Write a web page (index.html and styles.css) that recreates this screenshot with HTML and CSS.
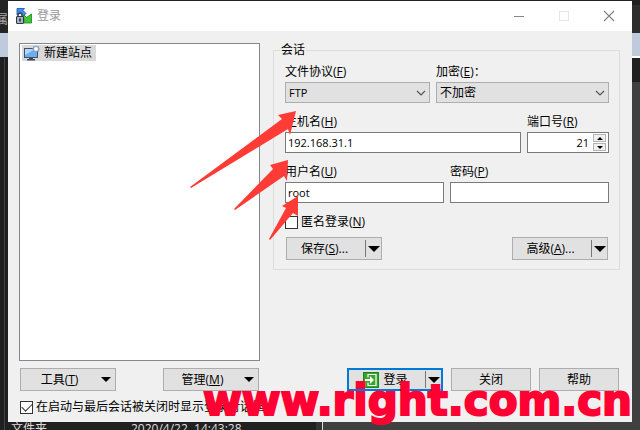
FILE: index.html
```html
<!DOCTYPE html>
<html lang="zh-CN">
<head>
<meta charset="utf-8">
<title>登录</title>
<link rel="stylesheet" href="styles.css">
</head>
<body>
<div class="backdrop-left"><span>属</span></div>
<div class="backdrop-right"></div>

<main class="window">
  <header class="titlebar">
    <svg class="logo" width="16" height="16" viewBox="0 0 16 16" aria-hidden="true">
      <path d="M1 .5h7.500L7 2.500l3 3-2.500 2.500-3-3L1 7z" fill="#3f8df0" stroke="#1750a0" stroke-width=".8"/>
      <path d="M8 7l2.500 2.500L15.500 6v9H7.500l1-2.500L7 10z" fill="#3fc735" stroke="#15801c" stroke-width=".8"/>
      <path d="M2 9V7.500q0-2.500 2-2.500t2 2.500V9" fill="none" stroke="#3b4656" stroke-width="1.500"/>
      <rect x=".5" y="8.500" width="7" height="7" rx=".5" fill="#a8b3c0" stroke="#2d3746"/>
      <path d="M4 10.500v3" stroke="#1b2430" stroke-width="1.500"/>
    </svg>
    <h1>登录</h1>
    <div class="window-controls">
      <button type="button" aria-label="最小化"><svg width="12" height="12" viewBox="0 0 12 12"><path d="M1 6.500h10" stroke="#888"/></svg></button>
      <button type="button" aria-label="最大化" disabled><svg width="12" height="12" viewBox="0 0 12 12"><path d="M1.500 1.500h9v9h-9z" fill="none" stroke="#e4e4e4"/></svg></button>
      <button type="button" aria-label="关闭窗口"><svg width="12" height="12" viewBox="0 0 12 12"><path d="M1 1l10 10M11 1L1 11" stroke="#808080" stroke-width="1.100"/></svg></button>
    </div>
  </header>

  <form class="content">
    <div class="panels">
      <ul class="sites">
        <li>
          <svg width="16" height="16" viewBox="0 0 16 16" aria-hidden="true">
            <rect x=".5" y="3.500" width="13" height="9" fill="#6eaef0" stroke="#445066"/>
            <path d="M1 4h10L1 10z" fill="#b2d8fb"/>
            <path d="M5 13h4v1h2v1.500H3V14h2z" fill="#3f4855"/>
            <path d="M12 0l1 1.500 2-.5v2l1 1-1 1v2l-2-.5L12 8l-1-1.500-2 .5V5L8 4l1-1V1l2 .5z" fill="#8ba4bd"/>
            <circle cx="12" cy="4" r="2" fill="#fff"/>
          </svg>
          <span>新建站点</span>
        </li>
      </ul>

      <fieldset class="session">
        <legend>会话</legend>
        <div class="row protocol">
          <div class="field">
            <label for="protocol">文件协议(<u>F</u>)</label>
            <div class="select">
              <select id="protocol" class="latin"><option>FTP</option></select>
              <svg width="10" height="6" viewBox="0 0 10 6" aria-hidden="true"><path d="M1 1l4 4 4-4" fill="none" stroke="#555" stroke-width="1.200"/></svg>
            </div>
          </div>
          <div class="field">
            <label for="encryption">加密(<u>E</u>)：</label>
            <div class="select">
              <select id="encryption"><option>不加密</option></select>
              <svg width="10" height="6" viewBox="0 0 10 6" aria-hidden="true"><path d="M1 1l4 4 4-4" fill="none" stroke="#555" stroke-width="1.200"/></svg>
            </div>
          </div>
        </div>
        <div class="row host">
          <div class="field">
            <label for="host">主机名(<u>H</u>)</label>
            <input id="host" type="text" value="192.168.31.1">
          </div>
          <div class="field">
            <label for="port">端口号(<u>R</u>)</label>
            <div class="spin">
              <input id="port" type="text" value="21">
              <div class="spin-buttons">
                <button type="button" aria-label="增加"><svg width="6" height="3" viewBox="0 0 6 3"><path d="M0 3l3-3 3 3z"/></svg></button>
                <button type="button" aria-label="减少"><svg width="6" height="3" viewBox="0 0 6 3"><path d="M0 0h6L3 3z"/></svg></button>
              </div>
            </div>
          </div>
        </div>
        <div class="row account">
          <div class="field">
            <label for="user">用户名(<u>U</u>)</label>
            <input id="user" type="text" value="root">
          </div>
          <div class="field">
            <label for="password">密码(<u>P</u>)</label>
            <input id="password" type="password">
          </div>
        </div>
        <label class="check"><input type="checkbox"><span>匿名登录(<u>N</u>)</span></label>
        <div class="actions">
          <button type="button" class="btn split"><span>保存(<u>S</u>)...</span><i class="caret"></i></button>
          <button type="button" class="btn split"><span>高级(<u>A</u>)...</span><i class="caret"></i></button>
        </div>
      </fieldset>
    </div>

    <footer class="footer">
      <div class="footer-left">
        <button type="button" class="btn menu"><span>工具(<u>T</u>)</span><i class="caret"></i></button>
        <button type="button" class="btn menu"><span>管理(<u>M</u>)</span><i class="caret"></i></button>
      </div>
      <div class="footer-right">
        <button type="submit" class="btn split primary">
          <span><svg width="16" height="16" viewBox="0 0 16 16" aria-hidden="true"><rect x=".5" y=".5" width="15" height="15" fill="#35a52b" stroke="#23821e"/><path d="M5 5.500v-3h8v11H5v-3" fill="none" stroke="#fff" stroke-width="1.200"/><path d="M2 7h5V4l4 4-4 4V9H2z" fill="#fff"/></svg>登录</span><i class="caret"></i>
        </button>
        <button type="button" class="btn">关闭</button>
        <button type="button" class="btn">帮助</button>
      </div>
    </footer>
    <label class="check startup"><input type="checkbox" checked><span>在启动与最后会话被关闭时显示登录对话框</span></label>
  </form>
</main>

<div class="file-list"><span>文件夹</span><span>2020/4/22&nbsp; 14:43:28</span></div>

<svg class="arrows" width="120" height="150" viewBox="185 100 120 150" aria-hidden="true">
  <path d="M296 111L278 115l4 4L190 187l1 1L288 129l2 6z"/>
  <path d="M288 160l-18 5 3 4L234 209l1 1L284 176l3 5z"/>
  <path d="M298 196l-16 10 4 2L269 239l1 1L293 213l5 3z"/>
</svg>
<div class="watermark">www.right.com.cn</div>
</body>
</html>
```

FILE: styles.css
```css
* {
  box-sizing: border-box;
}

body {
  position: relative;
  margin: 0;
  min-height: 100vh;
  overflow: hidden;
  background: #222;
  color: #000;
  font: 12px/16px "Open Sans", "Noto Sans CJK SC", sans-serif;
}

button,
input,
select {
  margin: 0;
  border-radius: 0;
  color: inherit;
  font: inherit;
}

/* Slices of the application behind the dialog */
.backdrop-left,
.backdrop-right {
  position: absolute;
  top: 0;
  bottom: 0;
  width: 8px;
  overflow: hidden;
}

.backdrop-left {
  left: 0;
  padding-top: 12px;
  background: linear-gradient(#242424 33px, #bdcbdc 33px 57px, #1f1f1f 57px);
  color: #aaa;
}

.backdrop-left::after {
  content: "";
  position: absolute;
  top: 58px;
  bottom: 0;
  left: 4px;
  border-left: 1px solid #3c414b;
}

.backdrop-left span {
  display: block;
  margin-left: -4px;
}

.backdrop-right {
  right: 0;
  background: linear-gradient(#202020 5px, #2d2d2d 5px 33px, #bdcbdc 33px 56px, #fff 56px 58px, #202020 58px 82px, #404040 82px);
}

.window {
  position: relative;
  margin: 1px 8px 0;
  background: #f0f0f0;
}

.titlebar {
  display: flex;
  align-items: center;
  height: 30px;
  padding: 0 1px 0 8px;
  background: #fff;
}

.titlebar h1 {
  margin: 0 auto 0 5px;
  color: #999;
  font-size: 12px;
  font-weight: 400;
}

.window-controls {
  display: flex;
}

.window-controls button {
  display: grid;
  place-items: center;
  width: 45px;
  height: 28px;
  padding: 0;
  border: 0;
  background: none;
}

.content {
  padding: 12px 12px 7px 11px;
}

.panels {
  display: grid;
  grid-template-columns: 241fr 347fr;
  gap: 13px;
}

.sites {
  min-height: 318px;
  margin: 0;
  padding: 1px 2px;
  border: 1px solid #828790;
  background: #fff;
  list-style: none;
}

.sites li {
  display: flex;
  align-items: center;
  gap: 4px;
  width: max-content;
  padding: 0 4px 0 2px;
  background: #d9d9d9;
}

.session {
  align-self: start;
  min-width: 0;
  margin: 0;
  padding: 7px 10px 9px 11px;
  border: 1px solid #dcdcdc;
}

.session legend {
  margin-left: -5px;
  padding: 0 1px;
  line-height: 14px;
}

.row {
  display: grid;
  gap: 6px;
  margin-bottom: 11px;
}

.protocol {
  grid-template-columns: 145fr 173fr;
}

.host {
  grid-template-columns: 236fr 82fr;
}

.account {
  grid-template-columns: 1fr 1fr;
}

.field {
  display: grid;
  gap: 2px;
  min-width: 0;
}

.field input {
  width: 100%;
  min-width: 0;
  height: 21px;
  padding: 0 2px;
  border: 1px solid #7a7a7a;
  background: #fff;
  font-size: 11px;
}

.select {
  position: relative;
}

.select select {
  display: block;
  width: 100%;
  height: 21px;
  padding: 0 3px;
  border: 1px solid #adadad;
  background: #e1e1e1;
  appearance: none;
}

.select .latin {
  font-size: 11px;
}

.select svg {
  position: absolute;
  top: 8px;
  right: 4px;
  pointer-events: none;
}

.spin {
  display: flex;
  height: 21px;
  padding: 1px 2px;
  border: 1px solid #7a7a7a;
  background: #fff;
}

.spin input {
  flex: 1;
  height: 17px;
  padding: 0 4px;
  border: 0;
  text-align: right;
}

.spin-buttons {
  display: grid;
  gap: 1px;
  width: 13px;
}

.spin-buttons button {
  display: grid;
  place-items: center;
  padding: 0;
  border: 1px solid #b4b4b4;
  background: #f0f0f0;
}

.check {
  display: flex;
  align-items: center;
  gap: 3px;
}

.check input {
  display: grid;
  place-items: center;
  width: 13px;
  height: 13px;
  border: 1px solid #333;
  background: #fff;
  appearance: none;
}

.check input:checked::before {
  content: "";
  width: 9px;
  height: 5px;
  margin-bottom: 3px;
  border: solid #333;
  border-width: 0 0 1px 1px;
  transform: rotate(-45deg);
}

.actions {
  display: flex;
  justify-content: space-between;
  margin-top: 7px;
  padding: 0 1px;
}

.btn {
  display: flex;
  align-items: center;
  justify-content: center;
  width: 80px;
  height: 23px;
  padding: 0;
  border: 1px solid #adadad;
  background: #e1e1e1;
}

.btn span {
  display: flex;
  flex: 1;
  align-items: center;
  justify-content: center;
}

.btn svg {
  margin-right: 4px;
}

.split,
.menu {
  width: 96px;
}

.split span {
  padding-right: 3px;
}

.caret {
  display: grid;
  place-items: center;
  width: 16px;
  height: 17px;
}

.caret::before {
  content: "";
  border: solid transparent;
  border-width: 6px 6px 0;
  border-top-color: #000;
}

.split .caret {
  border-left: 1px solid #777;
}

.menu .caret {
  margin-right: 1px;
}

.menu .caret::before {
  border-width: 5px 5px 0;
}

.primary {
  border: 2px solid #0078d7;
}

.footer {
  display: flex;
  justify-content: space-between;
  margin-top: 7px;
  padding: 0 1px;
}

.footer-left {
  display: flex;
  gap: 47px;
}

.footer-right {
  display: flex;
  gap: 8px;
}

.startup {
  margin-top: 8px;
  padding-left: 1px;
}

.file-list {
  position: relative;
  display: grid;
  grid-template-columns: 120px 1fr;
  height: 8px;
  margin: 0 8px;
  padding-left: 3px;
  overflow: hidden;
  background: linear-gradient(90deg, #202020 308px, #333 308px 314px, #ddd 314px 315px, #404040 315px);
  color: #ddd;
  line-height: 13px;
}

/* Marks drawn over the dialog */
.arrows {
  position: absolute;
  top: 100px;
  left: 185px;
  fill: #ff3b36;
  pointer-events: none;
}

.watermark {
  position: absolute;
  right: 8px;
  bottom: 5px;
  color: #ff0033;
  font: 700 42px/48px "DejaVu Sans", sans-serif;
  -webkit-text-stroke: 2px #ff0033;
  pointer-events: none;
}
```
